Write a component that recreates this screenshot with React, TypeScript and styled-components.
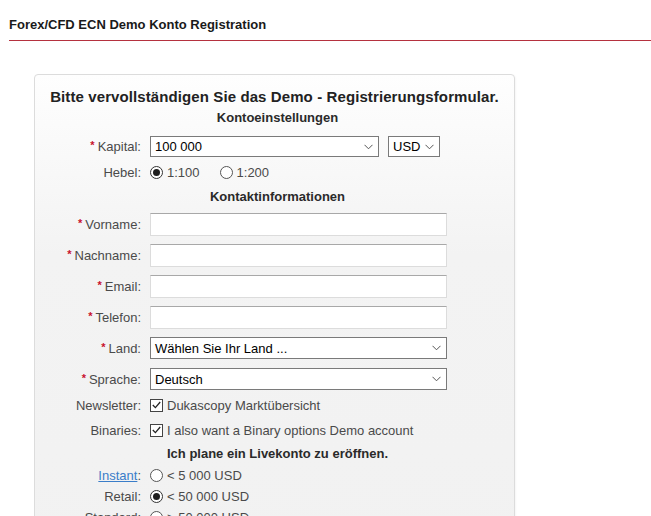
import React from "react";
import styled, { createGlobalStyle } from "styled-components";

const GlobalStyle = createGlobalStyle`
  html, body {
    margin: 0;
    padding: 0;
    background: #fff;
    overflow: hidden;
  }
  body {
    font-family: "Liberation Sans", Arial, sans-serif;
  }
`;

const Page = styled.div`
  padding: 17px 0 0 9px;
`;

const TitleBar = styled.header`
  padding-bottom: 7px;
  border-bottom: 1px solid #b5323f;
`;

const Title = styled.h1`
  margin: 0;
  font-size: 13px;
  line-height: 16px;
  font-weight: bold;
  color: #1a1a1a;
`;

const Panel = styled.section`
  margin: 33px 0 0 25px;
  width: 479px;
  min-height: 560px;
  padding-top: 13px;
  border: 1px solid #dcdcdc;
  border-radius: 4px;
  background: linear-gradient(#fefefe, #f3f3f3 180px, #f1f1f1);
  box-shadow: 1px 1px 2px rgba(0, 0, 0, 0.04);
`;

const Heading = styled.h2`
  margin: 0;
  font-size: 15px;
  line-height: 18px;
  font-weight: bold;
  text-align: center;
  letter-spacing: 0.1px;
  color: #222;
`;

const SubHeading = styled.h3<{ $gap: number }>`
  margin: ${(p) => p.$gap}px 0 0;
  padding-left: 6px;
  font-size: 13px;
  line-height: 16px;
  font-weight: bold;
  text-align: center;
  color: #2a2a2a;
`;

const Row = styled.div<{ $gap: number; $h: number }>`
  display: flex;
  align-items: center;
  gap: 9px;
  height: ${(p) => p.$h}px;
  margin-top: ${(p) => p.$gap}px;
`;

const Label = styled.div`
  width: 106px;
  flex: none;
  text-align: right;
  font-size: 13px;
  color: #4a4a4a;
  white-space: nowrap;
`;

const Req = styled.span`
  color: #c8102e;
  font-size: 11px;
  font-weight: bold;
  position: relative;
  top: -2px;
  margin-right: 3px;
`;

const Link = styled.a`
  color: #3a7dc9;
  text-decoration: underline;
`;

const Fields = styled.div`
  display: flex;
  align-items: center;
  height: 100%;
`;

const TextInput = styled.input`
  box-sizing: border-box;
  width: 297px;
  height: 23px;
  border: 1px solid #dcdcdc;
  border-top-color: #a8a8a8;
  background: #fff;
  outline: none;
  padding: 0 4px;
  font: 13px "Liberation Sans", Arial, sans-serif;
`;

const SelectBox = styled.div<{ $w: number; $h: number }>`
  box-sizing: border-box;
  width: ${(p) => p.$w}px;
  height: ${(p) => p.$h}px;
  display: flex;
  align-items: center;
  justify-content: space-between;
  padding: 0 5px 0 4px;
  border: 1px solid #7a7a7a;
  background: #fff;
  font-size: 13px;
  color: #000;
  margin-right: 9px;

  &:last-child {
    margin-right: 0;
  }
`;

const Option = styled.label<{ $space?: number }>`
  display: flex;
  align-items: center;
  gap: 4px;
  font-size: 13px;
  color: #4a4a4a;
  margin-right: ${(p) => p.$space ?? 0}px;
  white-space: nowrap;
`;

const RadioMark = styled.span<{ $on?: boolean }>`
  box-sizing: border-box;
  width: 13px;
  height: 13px;
  border-radius: 50%;
  border: 1px solid ${(p) => (p.$on ? "#333" : "#555")};
  background: #fff;
  display: flex;
  align-items: center;
  justify-content: center;

  &::after {
    content: "";
    width: 7px;
    height: 7px;
    border-radius: 50%;
    background: #1e1e1e;
    display: ${(p) => (p.$on ? "block" : "none")};
  }
`;

const CheckMark = styled.span`
  box-sizing: border-box;
  width: 13px;
  height: 13px;
  border: 1px solid #444;
  background: #fff;
  display: flex;
  align-items: center;
  justify-content: center;
`;

const Chevron = () => (
  <svg width="9" height="6" viewBox="0 0 9 6">
    <path d="M0.5 0.8 L4.5 4.8 L8.5 0.8" fill="none" stroke="#555" strokeWidth="1" />
  </svg>
);

const Select = ({ value, w, h = 21 }: { value: string; w: number; h?: number }) => (
  <SelectBox $w={w} $h={h}>
    <span>{value}</span>
    <Chevron />
  </SelectBox>
);

const Radio = ({ on, text, space }: { on?: boolean; text: string; space?: number }) => (
  <Option $space={space}>
    <RadioMark $on={on} />
    {text}
  </Option>
);

const Check = ({ text }: { text: string }) => (
  <Option>
    <CheckMark>
      <svg width="9" height="8" viewBox="0 0 9 8">
        <path d="M0.8 4 L3.4 6.6 L8.2 1" fill="none" stroke="#222" strokeWidth="1.3" />
      </svg>
    </CheckMark>
    {text}
  </Option>
);

const contactFields = ["Vorname", "Nachname", "Email", "Telefon"];

export default function App() {
  return (
    <>
      <GlobalStyle />
      <Page>
        <TitleBar>
          <Title>Forex/CFD ECN Demo Konto Registration</Title>
        </TitleBar>

        <Panel>
          <Heading>Bitte vervollständigen Sie das Demo - Registrierungsformular.</Heading>

          <SubHeading $gap={4}>Kontoeinstellungen</SubHeading>
          <Row $gap={10} $h={21}>
            <Label>
              <Req>*</Req>Kapital:
            </Label>
            <Fields>
              <Select value="100 000" w={229} />
              <Select value="USD" w={52} />
            </Fields>
          </Row>
          <Row $gap={5} $h={20}>
            <Label>Hebel:</Label>
            <Fields>
              <Radio on text="1:100" space={20} />
              <Radio text="1:200" />
            </Fields>
          </Row>

          <SubHeading $gap={7}>Kontaktinformationen</SubHeading>
          {contactFields.map((f) => (
            <Row key={f} $gap={8} $h={23}>
              <Label>
                <Req>*</Req>
                {f}:
              </Label>
              <TextInput type="text" />
            </Row>
          ))}
          <Row $gap={8} $h={22}>
            <Label>
              <Req>*</Req>Land:
            </Label>
            <Select value="Wählen Sie Ihr Land ..." w={297} h={22} />
          </Row>
          <Row $gap={9} $h={22}>
            <Label>
              <Req>*</Req>Sprache:
            </Label>
            <Select value="Deutsch" w={297} h={22} />
          </Row>
          <Row $gap={5} $h={20}>
            <Label>Newsletter:</Label>
            <Check text="Dukascopy Marktübersicht" />
          </Row>
          <Row $gap={5} $h={20}>
            <Label>Binaries:</Label>
            <Check text="I also want a Binary options Demo account" />
          </Row>

          <SubHeading $gap={6}>Ich plane ein Livekonto zu eröffnen.</SubHeading>
          <Row $gap={3} $h={20}>
            <Label>
              <Link href="#">Instant</Link>:
            </Label>
            <Radio text="< 5 000 USD" />
          </Row>
          <Row $gap={1} $h={20}>
            <Label>Retail:</Label>
            <Radio on text="< 50 000 USD" />
          </Row>
          <Row $gap={1} $h={20}>
            <Label>Standard:</Label>
            <Radio text="> 50 000 USD" />
          </Row>
        </Panel>
      </Page>
    </>
  );
}
